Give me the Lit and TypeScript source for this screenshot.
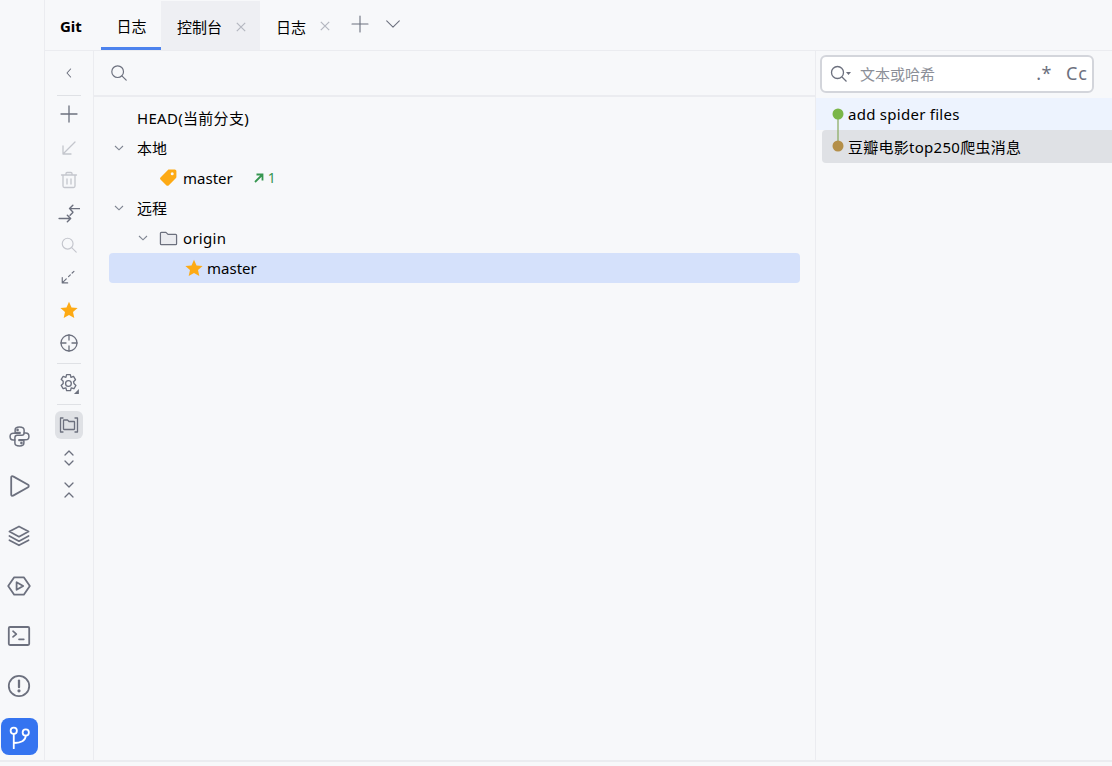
import { LitElement, html, css, svg } from "lit";
import { customElement } from "lit/decorators.js";

const ic = (body: unknown, size = 20, cls = "") =>
  html`<svg class=${cls} width=${size} height=${size} viewBox="0 0 20 20" fill="none" stroke="currentColor" stroke-width="1.3" stroke-linecap="round" stroke-linejoin="round">${body}</svg>`;

const star = (s: number) =>
  html`<svg width=${s} height=${s} viewBox="0 0 18 18"><path fill="#fdaa14" d="M9 .8l2.500 5.600 6.100.6-4.600 4.100 1.300 6-5.300-3.100-5.300 3.100 1.300-6L.4 7l6.100-.6z"/></svg>`;

const chevDown = html`<svg class="chev" width="12" height="12" viewBox="0 0 12 12" fill="none" stroke="#7f8592" stroke-width="1.1"><path d="M2 4l4 3.800L10 4"/></svg>`;

const close = html`<svg class="x" width="10" height="10" viewBox="0 0 10 10" fill="none" stroke="#b4b7c0" stroke-width="1.2"><path d="M.8.8l8.400 8.400M9.200.8L.8 9.200"/></svg>`;

@customElement("app-root")
export class AppRoot extends LitElement {
  static styles = css`
    :host { display: flex; flex-direction: column; width: 1112px; height: 766px; overflow: hidden; background: #f7f8fa; color: #000; font-family: "Noto Sans", "Noto Sans CJK SC", sans-serif; font-size: 15px; }
    .app { display: flex; height: 760px; flex: none; }
    .foot { flex: 1; border-top: 2px solid #ebecf0; }
    .stripe { width: 44px; flex: none; border-right: 1px solid #ebecf0; display: flex; flex-direction: column; justify-content: flex-end; padding-bottom: 5px; color: #6c707e; box-sizing: content-box; }
    .stripe svg { display: block; }
    .sb { width: 38px; height: 50px; flex: none; display: flex; align-items: center; justify-content: center; }
    .stripe .active { width: 37px; height: 37px; margin: 7px 0 0 1px; border-radius: 8px; background: #3574f0; color: #fff; display: flex; align-items: center; justify-content: center; flex: none; }
    .main { flex: 1; min-width: 0; display: flex; flex-direction: column; }
    .tabs { height: 51px; flex: none; border-bottom: 1px solid #ebecf0; display: flex; align-items: stretch; box-sizing: border-box; }
    .title { width: 41px; padding-left: 15px; font-weight: 700; font-size: 15px; line-height: 53px; }
    .tab { display: flex; align-items: center; gap: 13px; padding: 2px 0 0 0; font-size: 15px; box-sizing: border-box; }
    .t1 { width: 60px; justify-content: center; border-bottom: 3px solid #4d83ee; padding: 3px 0 0 1px; }
    .t2 { width: 99px; margin-top: 1px; background: #eeeff3; padding-left: 16px; gap: 14px; }
    .t3 { width: 87px; padding-left: 16px; gap: 14px; }
    .tabs .plus, .tabs .down { color: #6c707e; align-self: center; }
    .tabs .plus { margin-left: 3px; margin-top: -2px; }
    .tabs .down { margin-left: 14px; margin-top: -3px; }
    .body { flex: 1; display: flex; min-height: 0; }
    .tools { width: 48px; flex: none; border-right: 1px solid #ebecf0; display: flex; flex-direction: column; align-items: center; color: #6c707e; padding-top: 11px; }
    .tools svg { display: block; }
    .slot { height: 33px; display: flex; align-items: center; justify-content: center; flex: none; }
    .slot.first { height: 22px; margin-bottom: 11px; }
    .dim { color: #c4c6cd; }
    .sep { width: 24px; height: 1px; background: #dfe1e5; flex: none; }
    .sep.a { margin-bottom: 1px; }
    .sep.b { margin: 4px 0 3px; }
    .sep.d { margin: 4px 0 6px; }
    .toggle { width: 28px; height: 28px; border-radius: 6px; background: #dfe1e5; display: flex; align-items: center; justify-content: center; flex: none; margin-bottom: 3px; }
    .slot.s { height: 32px; }
    .slot.p { height: 34px; }
    .tree { flex: 1; min-width: 0; border-right: 1px solid #ebecf0; display: flex; flex-direction: column; }
    .search { height: 44px; flex: none; border-bottom: 2px solid #ebecf0; display: flex; align-items: center; padding-left: 16px; color: #6c707e; }
    .rows { padding: 6px 15px 0 15px; display: flex; flex-direction: column; }
    .row { height: 30px; display: flex; align-items: center; flex: none; white-space: nowrap; line-height: 30px; }
    .row .chev { flex: none; margin-left: 4px; }
    .l0 { padding-left: 28px; letter-spacing: .3px; }
    .lab { margin-left: 12px; }
    .sel { background: #d5e1fb; border-radius: 4px; }
    .branch { padding-left: 50px; gap: 6px; }
    .sel.branch { padding-left: 76px; gap: 4px; }
    .ahead { display: flex; align-items: center; gap: 4px; margin-left: 15px; color: #369650; font-size: 14px; }
    .org { padding-left: 24px; }
    .org svg.f { margin: 0 5px 0 10px; flex: none; color: #6c707e; }
    .org span { letter-spacing: .3px; }
    .log { width: 296px; flex: none; display: flex; flex-direction: column; position: relative; }
    .box { height: 38px; flex: none; margin: 4px 18px 0 4px; box-sizing: border-box; border: 2px solid #d3d5db; border-radius: 6px; background: #fff; display: flex; align-items: center; padding-left: 8px; color: #6c707e; }
    .ph { margin-left: 8px; color: #8c8f98; font-size: 15px; flex: 1; margin-top: -2px; }
    .re { font-size: 18px; margin-right: 14px; color: #6c707e; margin-top: -2px; letter-spacing: .5px; }
    .cc { font-size: 18px; margin-right: 4px; color: #6c707e; margin-top: -2px; letter-spacing: 1px; }
    .commits { margin-top: 5px; display: flex; flex-direction: column; position: relative; }
    .cm { display: flex; align-items: center; padding-left: 32px; white-space: nowrap; flex: none; letter-spacing: .27px; }
    .c1 { height: 32px; background: #edf3fe; }
    .c2 { height: 33px; background: #dfe1e5; margin-left: 6px; padding-left: 26px; border-radius: 4px 0 0 4px; }
    .graph { position: absolute; left: 16px; top: 10px; width: 12px; height: 46px; }
  `;

  render() {
    return html`
      <div class="app">
        <nav class="stripe">
          <div class="sb">${ic(svg`<path d="M9.900 1.800C6.800 1.800 6.200 3 6.200 4.400V6.500H10.500V7.100H4.500C3 7.100 1.800 8.300 1.800 10C1.800 11.800 3 13 4.500 13H6V11C6 9.800 7 9 8 9H12C13.100 9 14 8.200 14 7V4.400C14 3 13 1.800 9.900 1.800Z"/><path d="M14 7H15.500C17 7 18.200 8.300 18.200 10C18.200 11.800 17 12.900 15.500 12.900H9.500V13.500H13.800V15.600C13.800 17 13.200 18.200 10.100 18.200C7 18.200 6 17 6 15.600V13"/><circle cx="8.300" cy="4.300" r=".5" fill="currentColor"/><circle cx="11.700" cy="15.700" r=".5" fill="currentColor"/>`, 23)}</div>
          <div class="sb">${ic(svg`<path d="M3.500 3v14c0 1 .8 1.500 1.600 1l12.500-7c.7-.4.7-1.500 0-2L5.100 2c-.8-.5-1.600 0-1.600 1z" stroke-width="1.500"/>`, 24)}</div>
          <div class="sb">${ic(svg`<path d="M10 2l8 4.300-8 4.300-8-4.300zM2 10l8 4.300L18 10M2 13.500l8 4.300 8-4.300" stroke-width="1.400"/>`, 24)}</div>
          <div class="sb">${ic(svg`<path d="M6 2.800h8l5 7.200-5 7.200H6L1 10z" stroke-width="1.500"/><path d="M8 6.800v6.400l5.500-3.200z" stroke-width="1.500"/>`, 24)}</div>
          <div class="sb">${ic(svg`<rect x="1.500" y="2.500" width="17" height="15" rx="1" stroke-width="1.500"/><path d="M5 6l2.800 2.400L5 10.800M10 12.800h4" stroke-width="1.400"/>`, 24)}</div>
          <div class="sb">${ic(svg`<circle cx="10" cy="10" r="8.500" stroke-width="1.500"/><path d="M10 5.500v5.500" stroke-width="1.900"/><circle cx="10" cy="14" r=".7" fill="currentColor"/>`, 24)}</div>
          <div class="active">
            ${ic(svg`<circle cx="4.800" cy="4.800" r="2.600" stroke-width="1.500"/><circle cx="14.800" cy="6.200" r="2.600" stroke-width="1.500"/><path d="M4.800 7.500v12M4.800 15c5.500-.2 9.800-1.500 10-6.100" stroke-width="1.500"/>`, 24)}
          </div>
        </nav>
        <div class="main">
          <div class="tabs">
            <div class="title">Git</div>
            <div class="tab t1">日志</div>
            <div class="tab t2">控制台 ${close}</div>
            <div class="tab t3">日志 ${close}</div>
            ${ic(svg`<path d="M10 2v16M2 10h16" stroke-width="1.100"/>`, 20, "plus")}
            ${ic(svg`<path d="M3 6.500l7 7 7-7" stroke-width="1.200"/>`, 18, "down")}
          </div>
          <div class="body">
            <aside class="tools">
              <div class="slot first">${ic(svg`<path d="M12 5l-4.500 5 4.500 5"/>`, 16)}</div>
              <div class="sep a"></div>
              <div class="slot p">${ic(svg`<path d="M10 2v16M2 10h16"/>`, 20)}</div>
              <div class="slot dim">${ic(svg`<path d="M16 4L4 16M4 8v8h8"/>`, 20)}</div>
              <div class="slot dim s">${ic(svg`<path d="M2.500 5h15M7 5V3.500c0-.6.500-1 1-1h4c.5 0 1 .4 1 1V5M4 5v11c0 1 .7 1.500 1.500 1.500h9c.8 0 1.500-.5 1.500-1.500V5M8 9v5M12 9v5"/>`, 20)}</div>
              <div class="slot">${ic(svg`<path d="M20 6H10.500M13.500 3l-3 3 3 3M1 15h10.500M8.500 12l3 3-3 3M13.500 9.500L11 12"/>`, 22)}</div>
              <div class="slot dim s">${ic(svg`<circle cx="8.500" cy="8.500" r="6"/><path d="M13 13l5 5"/>`, 18)}</div>
              <div class="slot">${ic(svg`<path d="M2.500 9.500v6H8.500M2.500 15.500L7 11M9.500 8.500l2-2M13.500 4.500l2-1.800"/>`, 18)}</div>
              <div class="slot s">${star(18)}</div>
              <div class="slot">${ic(svg`<circle cx="10" cy="10" r="8"/><path d="M10 2v5M10 13v5M2 10h5M13 10h5"/>`, 20)}</div>
              <div class="sep b"></div>
              <div class="slot">
                <svg width="22" height="22" viewBox="0 0 20 20" fill="none" stroke="currentColor" stroke-width="1.200" stroke-linejoin="round"><path d="M7.800 1.500h3.400l.6 2.500 2.300-.9 1.800 3-1.800 1.800.4 1.600 1.800 1.800-1.800 3-2.500-.8-.6 2.500H7.800l-.6-2.500-2.500.8-1.800-3 1.800-1.800v-2L2.900 5.700l1.800-2.600 2.500.9z"/><circle cx="9.500" cy="9.500" r="2.600"/><path d="M14.500 19l4.500-4.500V19z" fill="currentColor" stroke="none"/></svg>
              </div>
              <div class="sep d"></div>
              <div class="toggle">${ic(svg`<path d="M4 3H1.500v14H4M16 3h2.500v14H16M4.500 5.500c0-.3.200-.5.500-.5h3.500l1.500 1.500h5c.3 0 .5.200.5.500v7c0 .3-.2.500-.5.500H5c-.3 0-.5-.2-.5-.5z"/>`, 20)}</div>
              <div class="slot s">${ic(svg`<path d="M6 7l4-4 4 4M6 13l4 4 4-4"/>`, 20)}</div>
              <div class="slot s">${ic(svg`<path d="M6 3l4 4 4-4M6 17l4-4 4 4"/>`, 20)}</div>
            </aside>
            <section class="tree">
              <div class="search">${ic(svg`<circle cx="8.500" cy="8.500" r="6.500"/><path d="M13.500 13.500l4.500 4.500"/>`, 18)}</div>
              <div class="rows">
                <div class="row l0">HEAD(当前分支)</div>
                <div class="row">${chevDown}<span class="lab">本地</span></div>
                <div class="row branch">
                  <svg width="18" height="18" viewBox="0 0 18 18"><path fill="#fdaa14" fill-rule="evenodd" d="M10 .6h5.800c.8 0 1.600.8 1.600 1.600V8c0 .4-.2.800-.4 1l-7.400 7.400c-.6.600-1.500.600-2.100 0L1.500 10.500c-.6-.6-.6-1.500 0-2.100L8.900 1c.3-.3.700-.4 1.100-.4zm3.200 2.700a1.500 1.500 0 100 3 1.500 1.500 0 000-3z"/></svg>
                  <span>master</span>
                  <span class="ahead"><svg width="10" height="10" viewBox="0 0 10 10" fill="none" stroke="#369650" stroke-width="1.800"><path d="M1 9l7-7M2.500 1.500h6v6"/></svg>1</span>
                </div>
                <div class="row">${chevDown}<span class="lab">远程</span></div>
                <div class="row org">${chevDown}
                  <svg class="f" width="19" height="19" viewBox="0 0 20 20" fill="#ebecf0" stroke="currentColor" stroke-width="1.300" stroke-linejoin="round"><path d="M1.500 4.500c0-.6.400-1 1-1h4.800l2.200 2.200h8c.6 0 1 .4 1 1v8.800c0 .6-.4 1-1 1h-15c-.6 0-1-.4-1-1z"/></svg>
                  <span>origin</span>
                </div>
                <div class="row sel branch">${star(18)}<span>master</span></div>
              </div>
            </section>
            <section class="log">
              <div class="box">
                <svg width="22" height="18" viewBox="0 0 22 18" fill="none" stroke="currentColor" stroke-width="1.300"><circle cx="7.500" cy="7.500" r="6"/><path d="M12 12l4.500 4.500"/><path d="M16 7h5l-2.500 3z" fill="currentColor" stroke="none"/></svg>
                <span class="ph">文本或哈希</span>
                <span class="re">.*</span>
                <span class="cc">Cc</span>
              </div>
              <div class="commits">
                <div class="cm c1">add spider files</div>
                <div class="cm c2">豆瓣电影top250爬虫消息</div>
                <svg class="graph" viewBox="0 0 12 46"><path d="M6 6v32" stroke="#86a85a" stroke-width="1.200"/><circle cx="6" cy="6" r="5.500" fill="#7ab648"/><circle cx="6" cy="38" r="5.500" fill="#b48f49"/></svg>
              </div>
            </section>
          </div>
        </div>
      </div>
      <div class="foot"></div>
    `;
  }
}
